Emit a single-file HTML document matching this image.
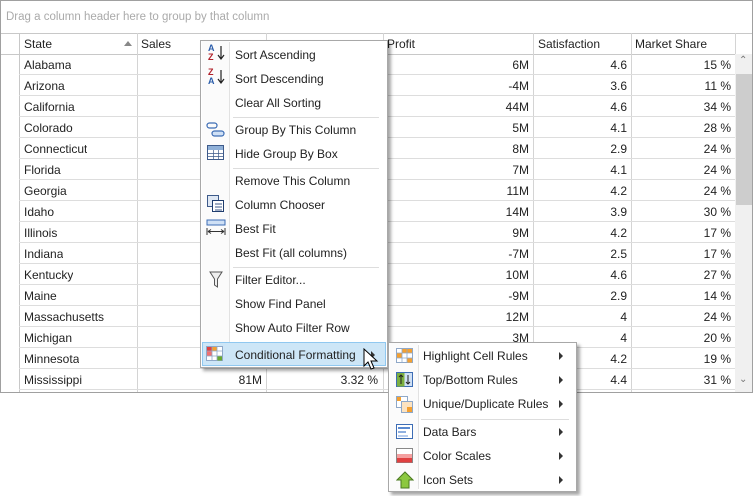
<!DOCTYPE html>
<html><head><meta charset="utf-8"><style>
*{box-sizing:border-box;margin:0;padding:0}
body{width:753px;height:496px;background:#fff;font-family:"Liberation Sans",Tahoma,sans-serif;font-size:12px;color:#222;position:relative;overflow:hidden}
.a{position:absolute}
.grid{left:0;top:0;width:753px;height:393px;border:1px solid #a0a0a0}
.gp{left:6px;top:11px;color:#aaa;font-size:11.5px}
.hl{background:#c8c8c8}
.cell{position:absolute;height:21px;line-height:23px;white-space:nowrap;overflow:hidden}
.r{text-align:right}
.menu{background:#fff;border:1px solid #a8a8a8;box-shadow:3px 3px 3px rgba(0,0,0,.35)}
.mi{position:absolute;left:34px;height:24px;line-height:24px;font-size:12px;color:#222;white-space:nowrap}
.sep{position:absolute;height:1px;background:#ddd}
.ic{position:absolute}
.arr{position:absolute;width:0;height:0;border-top:4px solid transparent;border-bottom:4px solid transparent;border-left:4px solid #333}
</style></head><body>
<div class="a grid"></div>
<div class="a gp">Drag a column header here to group by that column</div>
<div class="a hl" style="left:1px;top:33px;width:751px;height:1px"></div>
<div class="a hl" style="left:1px;top:54px;width:734px;height:1px"></div>
<div class="a" style="left:19px;top:33px;width:1px;height:359px;background:#c8c8c8"></div>
<div class="cell" style="left:24px;top:33px">State</div>
<div class="a" style="left:124px;top:41px;width:0;height:0;border-left:4px solid transparent;border-right:4px solid transparent;border-bottom:5px solid #888"></div>
<div class="cell" style="left:141px;top:33px">Sales</div>
<div class="cell" style="left:387px;top:33px">Profit</div>
<div class="cell" style="left:538px;top:33px">Satisfaction</div>
<div class="cell" style="left:635px;top:33px">Market Share</div>
<div id="cols"></div>
<div id="rows"></div>
<div class="a" style="left:735px;top:54px;width:17px;height:338px;background:#f0f0f0"></div>
<div class="a" style="left:736px;top:74px;width:16px;height:131px;background:#cdcdcd"></div>
<div class="a" style="left:739px;top:55px;color:#777;font-size:10px">&#8963;</div>
<div class="a" style="left:739px;top:374px;color:#777;font-size:10px">&#8964;</div>

<div class="a menu" style="left:200px;top:40px;width:188px;height:328px">
 <div class="a" style="left:28px;top:1px;width:1px;height:324px;background:#e2e2e2"></div>
 <div class="a" style="left:1px;top:0;width:27px;height:326px;background:#fbfbfb"></div>
 <div class="mi" style="top:2px">Sort Ascending</div>
 <div class="mi" style="top:26px">Sort Descending</div>
 <div class="mi" style="top:50px">Clear All Sorting</div>
 <div class="sep" style="left:32px;top:76px;width:146px"></div>
 <div class="mi" style="top:77px">Group By This Column</div>
 <div class="mi" style="top:101px">Hide Group By Box</div>
 <div class="sep" style="left:32px;top:127px;width:146px"></div>
 <div class="mi" style="top:128px">Remove This Column</div>
 <div class="mi" style="top:152px">Column Chooser</div>
 <div class="mi" style="top:176px">Best Fit</div>
 <div class="mi" style="top:200px">Best Fit (all columns)</div>
 <div class="sep" style="left:32px;top:226px;width:146px"></div>
 <div class="mi" style="top:227px">Filter Editor...</div>
 <div class="mi" style="top:251px">Show Find Panel</div>
 <div class="mi" style="top:275px">Show Auto Filter Row</div>
 <div class="sep" style="left:32px;top:301px;width:146px"></div>
 <div class="a" style="left:1px;top:301px;width:184px;height:24px;background:#cde6f7;border:1px solid #90c8f0"></div>
 <div class="mi" style="top:302px">Conditional Formatting</div>
 <div class="arr" style="left:170px;top:310px"></div>
 <div class="ic" style="left:7px;top:3px;font-size:9px;line-height:9px;font-weight:bold;color:#2a5caa">A<br><span style="color:#b0202a">Z</span></div>
 <svg class="ic" style="left:16px;top:4px" width="8" height="16"><path d="M4 1v13M1 10l3 4 3-4" stroke="#222" fill="none" stroke-width="1.2"/></svg>
 <div class="ic" style="left:7px;top:27px;font-size:9px;line-height:9px;font-weight:bold;color:#b0202a">Z<br><span style="color:#2a5caa">A</span></div>
 <svg class="ic" style="left:16px;top:28px" width="8" height="16"><path d="M4 1v13M1 10l3 4 3-4" stroke="#222" fill="none" stroke-width="1.2"/></svg>
 <svg class="ic" style="left:5px;top:81px" width="20" height="16"><rect x="1" y="1" width="10" height="5" rx="2.5" fill="none" stroke="#3d6db5" stroke-width="1.2"/><rect x="6" y="9" width="12" height="5" rx="2.5" fill="#cfe0f5" stroke="#3d6db5" stroke-width="1.2"/></svg>
 <svg class="ic" style="left:6px;top:104px" width="18" height="16"><rect x=".5" y=".5" width="16" height="14" fill="#fff" stroke="#3d5a8a"/><rect x="1" y="1" width="15" height="4" fill="#8fb0d8"/><path d="M1 8.5h15M1 11.5h15M6.5 5v10M11.5 5v10" stroke="#3d5a8a" stroke-width=".7"/></svg>
 <svg class="ic" style="left:6px;top:154px" width="18" height="18"><rect x=".5" y=".5" width="11" height="11" fill="#dfe8f4" stroke="#3d5a8a"/><rect x="5.5" y="5.5" width="11" height="11" fill="#fff" stroke="#1f3d6e"/><path d="M8 9h7M8 12h7M8 15h7" stroke="#3d5a8a"/></svg>
 <svg class="ic" style="left:5px;top:178px" width="20" height="18"><rect x="1" y="1" width="18" height="5" fill="#cfe0f5" stroke="#3d6db5"/><path d="M1 9v7M19 9v7M2 12.5h16M2 12.5l3-2M2 12.5l3 2M18 12.5l-3-2M18 12.5l-3 2" stroke="#333" fill="none"/></svg>
 <svg class="ic" style="left:8px;top:230px" width="14" height="18"><path d="M1 1h12l-4.5 7v8l-3-2V8z" fill="#eee" stroke="#555"/></svg>
 <svg class="ic" style="left:5px;top:305px" width="18" height="16"><rect x=".5" y=".5" width="16" height="14" fill="#fff" stroke="#8fa8c8"/><rect x="1" y="1" width="5" height="4" fill="#e04040"/><rect x="6" y="1" width="5" height="4" fill="#f4a030"/><rect x="1" y="5" width="5" height="5" fill="#f07070"/><rect x="11" y="10" width="5" height="4.5" fill="#6aaa30"/><path d="M.5 5h16M.5 10h16M6 .5v14M11 .5v14" stroke="#8fa8c8" stroke-width=".8"/></svg>
</div>
<svg class="a" style="left:363px;top:348px" width="16" height="24"><path d="M1 1v17l4-4 3 7 3-1-3-7h6z" fill="#fff" stroke="#000"/></svg>

<div class="a menu" style="left:388px;top:342px;width:189px;height:150px">
 <div class="a" style="left:1px;top:0;width:28px;height:148px;background:#fbfbfb"></div>
 <div class="a" style="left:29px;top:2px;width:1px;height:144px;background:#e2e2e2"></div>
 <div class="mi" style="top:1px">Highlight Cell Rules</div>
 <div class="mi" style="top:25px">Top/Bottom Rules</div>
 <div class="mi" style="top:49px">Unique/Duplicate Rules</div>
 <div class="sep" style="left:32px;top:76px;width:148px"></div>
 <div class="mi" style="top:77px">Data Bars</div>
 <div class="mi" style="top:101px">Color Scales</div>
 <div class="mi" style="top:125px">Icon Sets</div>
 <div class="arr" style="left:170px;top:9px"></div>
 <div class="arr" style="left:170px;top:33px"></div>
 <div class="arr" style="left:170px;top:57px"></div>
 <div class="arr" style="left:170px;top:85px"></div>
 <div class="arr" style="left:170px;top:109px"></div>
 <div class="arr" style="left:170px;top:133px"></div>
 <svg class="ic" style="left:7px;top:5px" width="18" height="16"><rect x=".5" y=".5" width="16" height="14" fill="#fff" stroke="#8fa8c8"/><rect x="6" y="1" width="5" height="4" fill="#f4a030"/><rect x="11" y="1" width="5" height="4" fill="#f4a030"/><rect x="1" y="5" width="5" height="5" fill="#f4a030"/><rect x="11" y="10" width="5" height="4.5" fill="#f4a030"/><path d="M.5 5h16M.5 10h16M6 .5v14M11 .5v14" stroke="#8fa8c8" stroke-width=".8"/></svg>
 <svg class="ic" style="left:7px;top:29px" width="18" height="16"><rect x=".5" y=".5" width="16" height="14" fill="#cfe0f5" stroke="#3d6db5"/><rect x="1" y="1" width="7.5" height="13.5" fill="#7cb040"/><path d="M5 3v9M3 5l2-2 2 2M12 3v9M10 10l2 2 2-2" stroke="#222" fill="none"/></svg>
 <svg class="ic" style="left:7px;top:53px" width="18" height="18"><rect x=".5" y=".5" width="11" height="11" fill="#fff" stroke="#8fa8c8"/><rect x="5.5" y="5.5" width="11" height="11" fill="#fde3c0" stroke="#8fa8c8"/><rect x="11" y="11" width="5" height="5" fill="#f4a030"/><rect x="1" y="1" width="4" height="4" fill="#f4a030"/></svg>
 <svg class="ic" style="left:7px;top:81px" width="18" height="16"><rect x=".5" y=".5" width="16" height="14" fill="#fff" stroke="#3d6db5"/><rect x="2" y="3" width="12" height="2" fill="#5b8ad0"/><rect x="2" y="7" width="8" height="2" fill="#8fb0e0"/><rect x="2" y="11" width="10" height="2" fill="#b8cdef"/></svg>
 <svg class="ic" style="left:7px;top:105px" width="18" height="16"><rect x=".5" y=".5" width="16" height="14" fill="#fff" stroke="#888"/><rect x="1" y="6" width="15" height="4" fill="#f4a0a0"/><rect x="1" y="10" width="15" height="4.5" fill="#e04040"/></svg>
 <svg class="ic" style="left:7px;top:128px" width="18" height="18"><path d="M9 1l8 8h-4v8H5V9H1z" fill="#8cc840" stroke="#4a7a20"/></svg>
</div>

<script>
var rows=[["Alabama","6M","4.6","15 %"],["Arizona","-4M","3.6","11 %"],["California","44M","4.6","34 %"],["Colorado","5M","4.1","28 %"],["Connecticut","8M","2.9","24 %"],["Florida","7M","4.1","24 %"],["Georgia","11M","4.2","24 %"],["Idaho","14M","3.9","30 %"],["Illinois","9M","4.2","17 %"],["Indiana","-7M","2.5","17 %"],["Kentucky","10M","4.6","27 %"],["Maine","-9M","2.9","14 %"],["Massachusetts","12M","4","24 %"],["Michigan","3M","4","20 %"],["Minnesota","","4.2","19 %"],["Mississippi","","4.4","31 %"]];
var h="";
rows.forEach(function(r,i){var t=54+i*21;
h+='<div class="cell" style="left:24px;top:'+t+'px">'+r[0]+'</div>';
h+='<div class="cell r" style="left:383px;width:146px;top:'+t+'px">'+r[1]+'</div>';
h+='<div class="cell r" style="left:533px;width:94px;top:'+t+'px">'+r[2]+'</div>';
h+='<div class="cell r" style="left:631px;width:100px;top:'+t+'px">'+r[3]+'</div>';
h+='<div class="a" style="left:19px;top:'+(t+20)+'px;width:716px;height:1px;background:#ddd"></div>';
});
h+='<div class="cell r" style="left:137px;width:125px;top:369px">81M</div>';
h+='<div class="cell r" style="left:266px;width:112px;top:369px">3.32 %</div>';
document.getElementById("rows").innerHTML=h;
var c="";[137,266,383,533,631,735].forEach(function(x){c+='<div class="a" style="left:'+x+'px;top:33px;width:1px;height:359px;background:#d4d4d4"></div>';});
document.getElementById("cols").innerHTML=c;
</script>
</body></html>
